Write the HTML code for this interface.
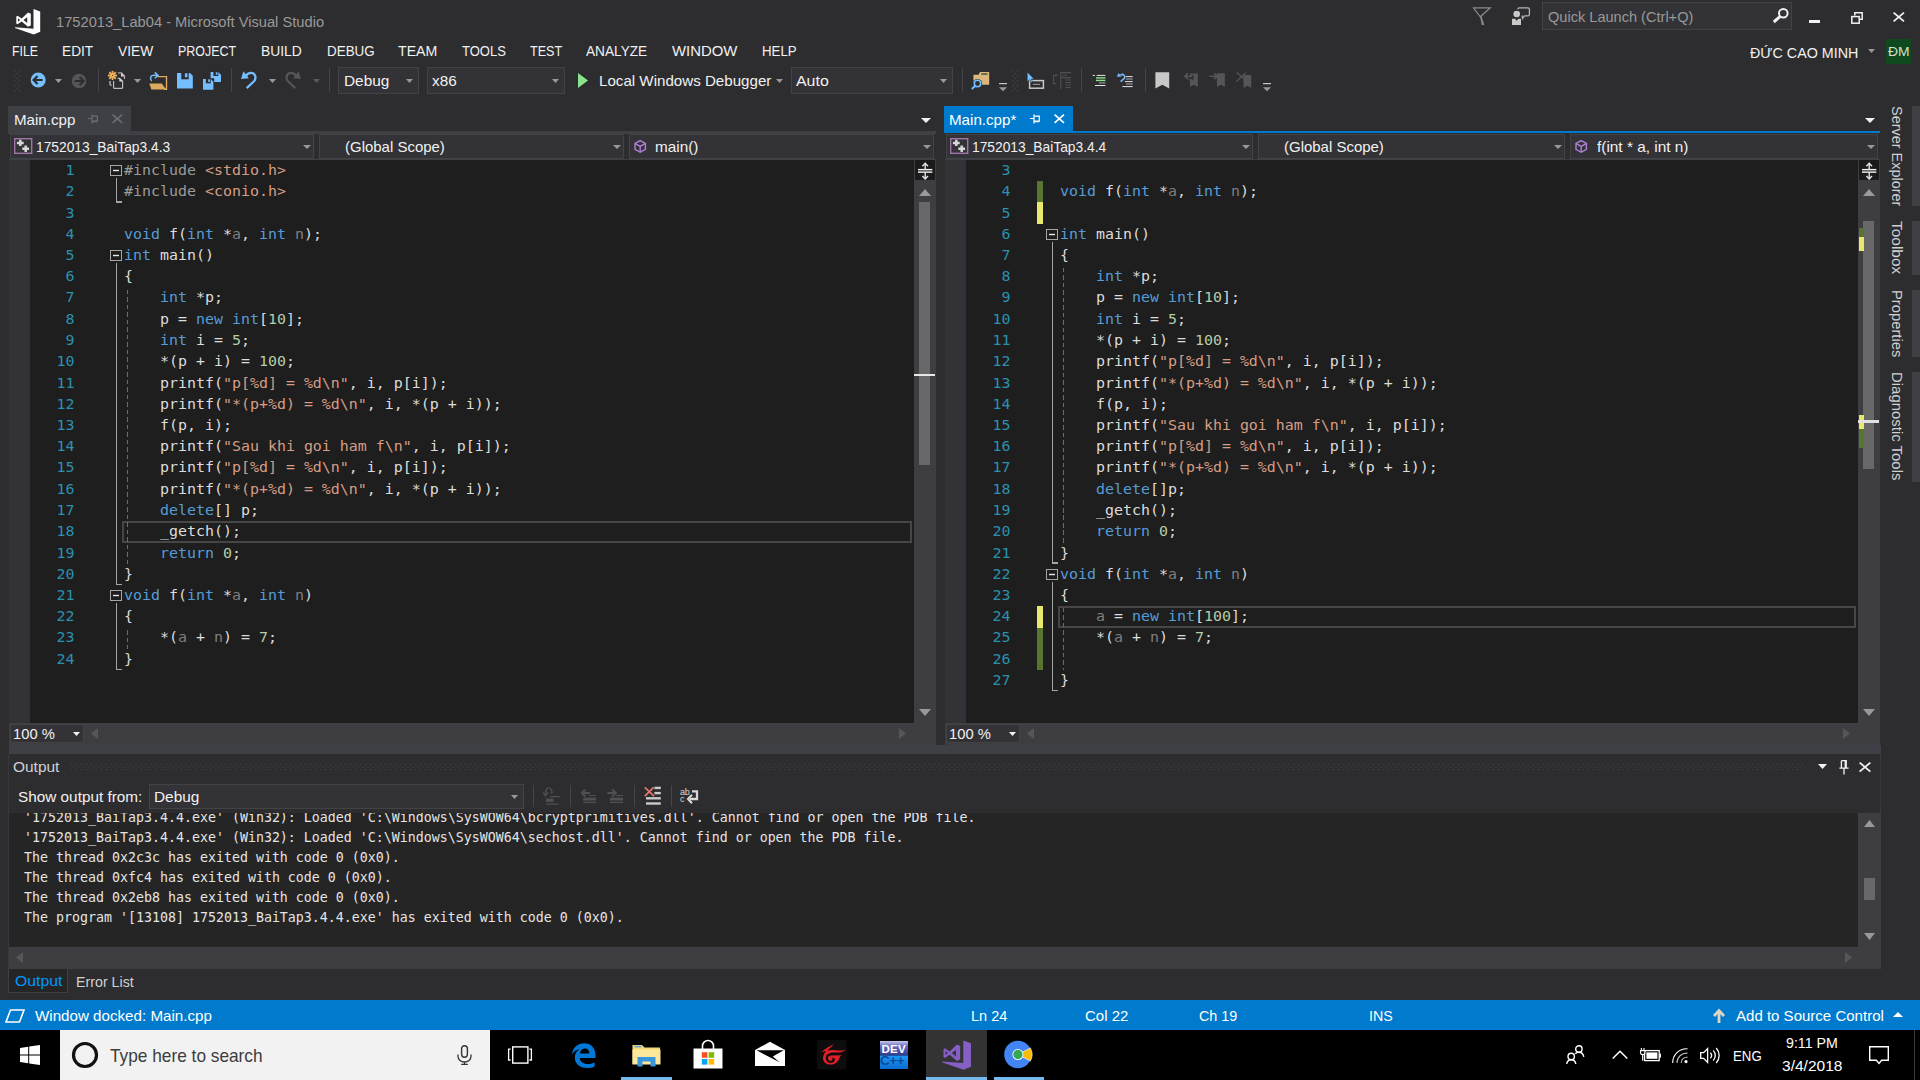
<!DOCTYPE html>
<html lang="en"><head><meta charset="utf-8"><title>1752013_Lab04 - Microsoft Visual Studio</title>
<style>
html,body{margin:0;padding:0;background:#2d2d30;}
#r{position:relative;width:1920px;height:1080px;overflow:hidden;background:#2d2d30;font-family:"Liberation Sans",sans-serif;}
#r div,#r span,#r svg{position:absolute;}
#r span{white-space:pre;line-height:20px;height:20px;transform-origin:0 50%;}
#r svg{overflow:visible;}
#r .m{font-family:"DejaVu Sans Mono","Liberation Mono",monospace;font-size:14.95px;}
#r .c{color:#dcdcdc;}
#r .o{font-family:"DejaVu Sans Mono","Liberation Mono",monospace;font-size:13.29px;color:#e4e4e4;}
#r b{font-weight:normal;}
.k{color:#569cd6}.s{color:#d69d85}.n{color:#b5cea8}.g{color:#7f7f7f}.p{color:#9b9b9b}
</style></head>
<body><div id="r">
<svg style="left:15px;top:8px;" width="26" height="27" viewBox="0 0 26 27"><path d="M18.5 1L25.2 3.5V23.8L18.7 26.5L-0.1 20L0.2 19.3L18.5 20.7Z M1.3 8.6L2.5 7.8L6.7 10.6L13 4.6L15.8 5.8V17.6L13 18.8L6.7 13.4L2.5 16.2L1.3 15.4Z M3 10.3L5.1 12L3 13.7Z M12.2 9.2V15L8.5 12Z" fill="#ffffff" fill-rule="evenodd"/></svg>
<span style="left:56px;top:12.13px;font-size:15.5px;color:#999999;transform:scaleX(0.9465);">1752013_Lab04 - Microsoft Visual Studio</span>
<svg style="left:1472px;top:7px;" width="20" height="19" viewBox="0 0 20 19"><path d="M1.5 0.8H18.3L8.3 9.8Z" fill="none" stroke="#8a8a8a" stroke-width="1.2" stroke-linejoin="miter"/><path d="M8 9.5L9.3 8.6L12.3 18H9.8Z" fill="#8a8a8a"/></svg>
<svg style="left:1511px;top:7px;" width="20" height="19" viewBox="0 0 20 19"><circle cx="5.7" cy="7" r="3.3" fill="#c8c8c8"/><path d="M1 11.8H4L5.7 13.8L7.4 11.8H10V18H1Z" fill="#c8c8c8"/><path d="M7 2.2Q7 0.9 8.3 0.9H17Q18.4 0.9 18.4 2.2V7.5Q18.4 8.8 17 8.8H13.5L11.6 11.5L11 8.5" fill="none" stroke="#b4b4b4" stroke-width="1.3"/></svg>
<div style="left:1542px;top:2px;width:250px;height:28px;background:#333337;border:1px solid #434346;box-sizing:border-box;"></div>
<span style="left:1548px;top:7.30px;font-size:15px;color:#999999;transform:scaleX(0.9711);">Quick Launch (Ctrl+Q)</span>
<svg style="left:1772px;top:7px;" width="18" height="18" viewBox="0 0 18 18"><circle cx="11.3" cy="6.3" r="4.3" fill="none" stroke="#f1f1f1" stroke-width="2"/><path d="M8.2 9.4L1.8 15" stroke="#f1f1f1" stroke-width="3" stroke-linecap="butt"/></svg>
<div style="left:1809px;top:20px;width:11px;height:3px;background:#f1f1f1;"></div>
<svg style="left:1851px;top:12px;" width="12" height="12" viewBox="0 0 12 12"><path d="M3.8 3.5V0.8H11.2V7.2H8.8" fill="none" stroke="#f1f1f1" stroke-width="1.5"/><rect x="0.8" y="4.6" width="7.4" height="6.6" fill="none" stroke="#f1f1f1" stroke-width="1.5"/></svg>
<svg style="left:1893.2px;top:12px;" width="11.6" height="10" viewBox="0 0 11.6 10"><path d="M0.6 0.6L11.0 9.4M11.0 0.6L0.6 9.4" stroke="#f1f1f1" stroke-width="1.8"/></svg>
<span style="left:12px;top:41.33px;font-size:15.5px;color:#f1f1f1;transform:scaleX(0.7977);">FILE</span>
<span style="left:62px;top:41.33px;font-size:15.5px;color:#f1f1f1;transform:scaleX(0.8847);">EDIT</span>
<span style="left:118px;top:41.33px;font-size:15.5px;color:#f1f1f1;transform:scaleX(0.8896);">VIEW</span>
<span style="left:178px;top:41.33px;font-size:15.5px;color:#f1f1f1;transform:scaleX(0.8035);">PROJECT</span>
<span style="left:260.5px;top:41.33px;font-size:15.5px;color:#f1f1f1;transform:scaleX(0.8925);">BUILD</span>
<span style="left:326.5px;top:41.33px;font-size:15.5px;color:#f1f1f1;transform:scaleX(0.8655);">DEBUG</span>
<span style="left:398px;top:41.33px;font-size:15.5px;color:#f1f1f1;transform:scaleX(0.9121);">TEAM</span>
<span style="left:462px;top:41.33px;font-size:15.5px;color:#f1f1f1;transform:scaleX(0.8408);">TOOLS</span>
<span style="left:530px;top:41.33px;font-size:15.5px;color:#f1f1f1;transform:scaleX(0.8111);">TEST</span>
<span style="left:586px;top:41.33px;font-size:15.5px;color:#f1f1f1;transform:scaleX(0.8810);">ANALYZE</span>
<span style="left:672px;top:41.33px;font-size:15.5px;color:#f1f1f1;transform:scaleX(0.9608);">WINDOW</span>
<span style="left:762px;top:41.33px;font-size:15.5px;color:#f1f1f1;transform:scaleX(0.8569);">HELP</span>
<span style="left:1750px;top:43.30px;font-size:15px;color:#f1f1f1;transform:scaleX(0.9529);">ĐỨC CAO MINH</span>
<svg style="left:1868px;top:49px;" width="7" height="4" viewBox="0 0 7 4"><path d="M0 0H7L3.5 4Z" fill="#999999"/></svg>
<div style="left:1886px;top:39px;width:25px;height:25px;background:#0e4a1d;"></div>
<span style="left:1888.3px;top:41.80px;font-size:13px;color:#d0e0d0;transform:scaleX(1.0658);">ĐM</span>
<svg style="left:14px;top:70px;" width="7" height="22" viewBox="0 0 7 22"><g fill="#4a4a4f"><rect x="0.2" y="0.20000000000000007" width="1.2" height="1.2"/><rect x="4.9" y="0.20000000000000007" width="1.2" height="1.2"/><rect x="2.55" y="2.6999999999999997" width="1.2" height="1.2"/><rect x="0.2" y="5.2" width="1.2" height="1.2"/><rect x="4.9" y="5.2" width="1.2" height="1.2"/><rect x="2.55" y="7.700000000000001" width="1.2" height="1.2"/><rect x="0.2" y="10.200000000000001" width="1.2" height="1.2"/><rect x="4.9" y="10.200000000000001" width="1.2" height="1.2"/><rect x="2.55" y="12.700000000000001" width="1.2" height="1.2"/><rect x="0.2" y="15.200000000000001" width="1.2" height="1.2"/><rect x="4.9" y="15.200000000000001" width="1.2" height="1.2"/><rect x="2.55" y="17.7" width="1.2" height="1.2"/><rect x="0.2" y="20.2" width="1.2" height="1.2"/><rect x="4.9" y="20.2" width="1.2" height="1.2"/></g></svg>
<svg style="left:30px;top:72px;" width="16" height="16" viewBox="0 0 16 16"><circle cx="8.2" cy="8" r="7.5" fill="#75beff"/><path d="M12.6 8H4M7.6 4L3.6 8L7.6 12" fill="none" stroke="#2d2d30" stroke-width="2.2"/></svg>
<svg style="left:55px;top:79px;" width="7" height="4" viewBox="0 0 7 4"><path d="M0 0H7L3.5 4Z" fill="#999999"/></svg>
<svg style="left:71px;top:72px;" width="16" height="17" viewBox="0 0 16 17"><circle cx="8" cy="9" r="7.3" fill="#555558"/><path d="M3.6 9H12.2M8.6 5L12.6 9L8.6 13" fill="none" stroke="#2d2d30" stroke-width="2.2"/></svg>
<div style="left:98px;top:68px;width:1px;height:24px;background:#46464a;"></div>
<svg style="left:108px;top:71px;" width="18" height="19" viewBox="0 0 18 19"><path d="M4.5 4.5L9.10 4.50" stroke="#f0b35e" stroke-width="1.8"/><path d="M4.5 4.5L7.75 7.75" stroke="#f0b35e" stroke-width="1.8"/><path d="M4.5 4.5L4.50 9.10" stroke="#f0b35e" stroke-width="1.8"/><path d="M4.5 4.5L1.25 7.75" stroke="#f0b35e" stroke-width="1.8"/><path d="M4.5 4.5L-0.10 4.50" stroke="#f0b35e" stroke-width="1.8"/><path d="M4.5 4.5L1.25 1.25" stroke="#f0b35e" stroke-width="1.8"/><path d="M4.5 4.5L4.50 -0.10" stroke="#f0b35e" stroke-width="1.8"/><path d="M4.5 4.5L7.75 1.25" stroke="#f0b35e" stroke-width="1.8"/><circle cx="4.5" cy="4.5" r="1.5" fill="#f0b35e"/><circle cx="4.5" cy="4.5" r="0.55" fill="#2d2d30"/><path d="M9.8 1.8H13.4L16.5 5V8" fill="none" stroke="#a8a8a8" stroke-width="1.3"/><path d="M13 1.6L16.8 5.4H13Z" fill="#d4d4d4"/><path d="M9.6 7.4H11.6L14.6 10.2V16.4Q14.6 17.4 13.6 17.4H6.6Q5.6 17.4 5.6 16.4V10" fill="none" stroke="#bcbcbc" stroke-width="1.2"/><path d="M11.4 7L15 10.6H11.4Z" fill="#dcdcdc"/><path d="M2 10V13Q2 14.4 3.6 14.4" fill="none" stroke="#c0c0c0" stroke-width="1.3"/></svg>
<svg style="left:134px;top:79px;" width="7" height="4" viewBox="0 0 7 4"><path d="M0 0H7L3.5 4Z" fill="#999999"/></svg>
<svg style="left:149px;top:72px;" width="19" height="18" viewBox="0 0 19 18"><path d="M8.2 4.6H17.5V17.2H15" fill="none" stroke="#dcab5f" stroke-width="1.4"/><path d="M0.3 11.6H12.8L17 17.6H2.4Z" fill="#dcab5f"/><path d="M2.8 9C0.3 6.5 1.5 3.3 5 3.3H8" fill="none" stroke="#75beff" stroke-width="1.5"/><path d="M5.8 0.4L9 3.3L5.8 6.3" fill="none" stroke="#75beff" stroke-width="1.5"/></svg>
<svg style="left:177px;top:73px;" width="16" height="16" viewBox="0 0 16 16"><path d="M0 0H13.0L15.8 2.8V15.6H0Z" fill="#75beff"/><rect x="4.27" y="-0.1" width="7.43" height="6.40" fill="#2d2d30"/><rect x="7.90" y="0.3" width="2.53" height="3.90" fill="#75beff"/></svg>
<svg style="left:202px;top:72px;" width="20" height="18" viewBox="0 0 20 18"><g transform="translate(8.6,0)"><path d="M0 0H7.6000000000000005L10.4 2.8V10H0Z" fill="#75beff"/><rect x="2.81" y="-0.1" width="4.89" height="4.10" fill="#2d2d30"/><rect x="5.20" y="0.3" width="1.66" height="2.50" fill="#75beff"/></g><path d="M7.6 6.2H12.2V11H7.6Z" fill="#2d2d30"/><g transform="translate(1,7)"><path d="M0 0H7.6000000000000005L10.4 2.8V10.7H0Z" fill="#75beff"/><rect x="2.81" y="-0.1" width="4.89" height="4.39" fill="#2d2d30"/><rect x="5.20" y="0.3" width="1.66" height="2.67" fill="#75beff"/></g></svg>
<div style="left:231px;top:68px;width:1px;height:24px;background:#46464a;"></div>
<svg style="left:241px;top:72px;" width="16" height="17" viewBox="0 0 16 17"><g><path d="M5.7 16.2L13 9.3C15.8 6.3 14.3 0.8 10 0.8C7.6 0.8 5.8 2.2 4.8 4.2" fill="none" stroke="#75beff" stroke-width="2.3"/><path d="M2.4 -0.8L0 6.9L7.9 6.3Z" fill="#75beff"/></g></svg>
<svg style="left:269px;top:79px;" width="7" height="4" viewBox="0 0 7 4"><path d="M0 0H7L3.5 4Z" fill="#999999"/></svg>
<svg style="left:285px;top:72px;" width="16" height="17" viewBox="0 0 16 17"><g transform="translate(16,0) scale(-1,1)"><path d="M5.7 16.2L13 9.3C15.8 6.3 14.3 0.8 10 0.8C7.6 0.8 5.8 2.2 4.8 4.2" fill="none" stroke="#555558" stroke-width="2.3"/><path d="M2.4 -0.8L0 6.9L7.9 6.3Z" fill="#555558"/></g></svg>
<svg style="left:313px;top:79px;" width="7" height="4" viewBox="0 0 7 4"><path d="M0 0H7L3.5 4Z" fill="#5a5a5e"/></svg>
<div style="left:329px;top:68px;width:1px;height:24px;background:#46464a;"></div>
<div style="left:338px;top:67px;width:81px;height:27px;background:#333337;border:1px solid #434346;box-sizing:border-box;"></div>
<span style="left:343.5px;top:71.10px;font-size:15px;color:#f1f1f1;transform:scaleX(1.0268);">Debug</span>
<svg style="left:406px;top:79px;" width="7" height="4" viewBox="0 0 7 4"><path d="M0 0H7L3.5 4Z" fill="#999999"/></svg>
<div style="left:427px;top:67px;width:138px;height:27px;background:#333337;border:1px solid #434346;box-sizing:border-box;"></div>
<span style="left:431.7px;top:71.10px;font-size:15px;color:#f1f1f1;transform:scaleX(1.0204);">x86</span>
<svg style="left:552px;top:79px;" width="7" height="4" viewBox="0 0 7 4"><path d="M0 0H7L3.5 4Z" fill="#999999"/></svg>
<svg style="left:578px;top:73px;" width="10" height="15" viewBox="0 0 10 15"><path d="M0 0L10 7.5L0 15Z" fill="#8ae28a"/></svg>
<span style="left:599px;top:70.80px;font-size:15px;color:#f1f1f1;transform:scaleX(1.0084);">Local Windows Debugger</span>
<svg style="left:776px;top:79px;" width="7" height="4" viewBox="0 0 7 4"><path d="M0 0H7L3.5 4Z" fill="#999999"/></svg>
<div style="left:791px;top:67px;width:162px;height:27px;background:#333337;border:1px solid #434346;box-sizing:border-box;"></div>
<span style="left:796px;top:71.10px;font-size:15px;color:#f1f1f1;transform:scaleX(1.0608);">Auto</span>
<svg style="left:940px;top:79px;" width="7" height="4" viewBox="0 0 7 4"><path d="M0 0H7L3.5 4Z" fill="#999999"/></svg>
<div style="left:962px;top:68px;width:1px;height:24px;background:#46464a;"></div>
<svg style="left:971px;top:71px;" width="19" height="18" viewBox="0 0 19 18"><path d="M2.4 3.8H7.5L9 1H18.2V13.8H2.4Z" fill="#dcb67a"/><rect x="10.2" y="2.4" width="6.3" height="1.3" fill="#2d4a3a"/><circle cx="6.5" cy="12.5" r="4.6" fill="#2d2d30"/><circle cx="6.5" cy="12.5" r="3.2" fill="none" stroke="#75beff" stroke-width="1.6"/><path d="M4.3 14.8L0.8 18" stroke="#75beff" stroke-width="2"/></svg>
<svg style="left:999px;top:83px;" width="8" height="8.2" viewBox="0 0 8 8.2"><rect x="0" y="0" width="8" height="1.2" fill="#c8c8c8"/><path d="M0 4.3H8L4 8.2Z" fill="#999999"/></svg>
<svg style="left:1012px;top:70px;" width="7" height="22" viewBox="0 0 7 22"><g fill="#4a4a4f"><rect x="0.2" y="0.20000000000000007" width="1.2" height="1.2"/><rect x="4.9" y="0.20000000000000007" width="1.2" height="1.2"/><rect x="2.55" y="2.6999999999999997" width="1.2" height="1.2"/><rect x="0.2" y="5.2" width="1.2" height="1.2"/><rect x="4.9" y="5.2" width="1.2" height="1.2"/><rect x="2.55" y="7.700000000000001" width="1.2" height="1.2"/><rect x="0.2" y="10.200000000000001" width="1.2" height="1.2"/><rect x="4.9" y="10.200000000000001" width="1.2" height="1.2"/><rect x="2.55" y="12.700000000000001" width="1.2" height="1.2"/><rect x="0.2" y="15.200000000000001" width="1.2" height="1.2"/><rect x="4.9" y="15.200000000000001" width="1.2" height="1.2"/><rect x="2.55" y="17.7" width="1.2" height="1.2"/><rect x="0.2" y="20.2" width="1.2" height="1.2"/><rect x="4.9" y="20.2" width="1.2" height="1.2"/></g></svg>
<svg style="left:1027px;top:72px;" width="18" height="17" viewBox="0 0 18 17"><rect x="2.6" y="8.6" width="13.8" height="7.6" fill="#2d2d30" stroke="#c8c8c8" stroke-width="1.5"/><rect x="5.8" y="11.8" width="7.2" height="1.1" fill="#999999"/><path d="M0.2 0L7.2 7L4.3 7.2L5.6 10L3.9 10.6L2.6 7.8L0.2 9.6Z" fill="#75beff" stroke="#2d2d30" stroke-width="0.6"/></svg>
<svg style="left:1053px;top:72px;" width="18" height="17" viewBox="0 0 18 17"><g fill="none" stroke="#505054" stroke-width="1.1"><path d="M3 3.3H0.6V11.6H3.4"/><path d="M7.8 0V17"/><path d="M7.8 0.6H18M7.8 5.6H18M9.5 3.3H14M12.3 8H18M12.3 10.5H18M12.3 13H18M12.3 15.5H18"/></g><path d="M2.6 1.6L4.8 3.3L2.6 5Z" fill="#505054"/></svg>
<div style="left:1081px;top:68px;width:1px;height:24px;background:#46464a;"></div>
<svg style="left:1092px;top:74px;" width="14" height="12" viewBox="0 0 14 12"><rect x="0.7" y="0.9" width="2.2" height="1" fill="#e6e6e6"/><rect x="4.7" y="0.9" width="8.7" height="1" fill="#e6e6e6"/><rect x="4" y="3.2" width="9.4" height="1.4" fill="#8ae28a"/><rect x="4" y="5.7" width="9.4" height="1.4" fill="#8ae28a"/><rect x="7" y="8.4" width="6.4" height="1" fill="#aaaaaa"/><rect x="3" y="11" width="10.4" height="1" fill="#e6e6e6"/></svg>
<svg style="left:1117px;top:73px;" width="16" height="14" viewBox="0 0 16 14"><path d="M3.6 8.6L7 5.6A2.3 2.3 0 0 0 3.6 2.2" fill="none" stroke="#75beff" stroke-width="1.5"/><path d="M0 3.8L1.4 0L4.6 3.6Z" fill="#75beff"/><rect x="9" y="3.1" width="6.7" height="1" fill="#e6e6e6"/><rect x="9" y="5.5" width="6.7" height="1" fill="#aaaaaa"/><rect x="7.9" y="8.1" width="7.8" height="1" fill="#e6e6e6"/><rect x="9" y="10.5" width="6.7" height="1" fill="#aaaaaa"/><rect x="5.4" y="13.1" width="10.3" height="1" fill="#e6e6e6"/></svg>
<div style="left:1145px;top:68px;width:1px;height:24px;background:#46464a;"></div>
<svg style="left:1155px;top:72px;" width="14" height="17" viewBox="0 0 14 17"><path d="M0.4 0.2H14.2V16.6L7.3 12.8L0.4 16.6Z" fill="#c8c8c8"/></svg>
<svg style="left:1184px;top:72px;" width="14" height="16" viewBox="0 0 14 16"><path d="M6 1.6H13.8V15L9.9 12.8L6 15Z" fill="#555558"/><path d="M9.5 3.2L6.4 3.2L6.4 8.4L9.5 8.4Z" fill="#2d2d30"/><path d="M8.2 4.2H1M4 1.2L0.8 4.2L4 7.2" fill="none" stroke="#555558" stroke-width="1.6"/><path d="M4 7.5L8.6 10V7.2Z" fill="#555558"/></svg>
<svg style="left:1209px;top:72px;" width="16" height="16" viewBox="0 0 16 16"><path d="M8 1.2H15.9V15L11.9 12.8L8 15Z" fill="#555558"/><path d="M0.4 4.2H8M5 1.2L8.4 4.2L5 7.2" fill="none" stroke="#555558" stroke-width="1.6"/></svg>
<svg style="left:1236px;top:72px;" width="16" height="17" viewBox="0 0 16 17"><path d="M7.5 3H15.2V16L11.3 13.8L7.5 16Z" fill="#555558"/><path d="M0.8 0.4L11 9.6M9.6 1L0.4 9.6" fill="none" stroke="#555558" stroke-width="1.4"/></svg>
<svg style="left:1263px;top:83px;" width="8" height="8.2" viewBox="0 0 8 8.2"><rect x="0" y="0" width="8" height="1.2" fill="#c8c8c8"/><path d="M0 4.3H8L4 8.2Z" fill="#999999"/></svg>
<div style="left:8px;top:106px;width:123px;height:25px;background:#3f3f46;"></div>
<div style="left:8px;top:131px;width:928px;height:2.5px;background:#3f3f46;"></div>
<span style="left:13.5px;top:109.90px;font-size:15px;color:#f1f1f1;transform:scaleX(1.0082);">Main.cpp</span>
<svg style="left:88px;top:113.8px;" width="10" height="10" viewBox="0 0 10 10"><path d="M0 4.5H4M4 0.5V9.5M4 2.2H9.3V7H4M4 7.7H9.3" fill="none" stroke="#6d6d70" stroke-width="1.2"/></svg>
<svg style="left:111.6px;top:114.2px;" width="10.8" height="9.5" viewBox="0 0 10.8 9.5"><path d="M0.6 0.6L10.200000000000001 8.9M10.200000000000001 0.6L0.6 8.9" stroke="#6d6d70" stroke-width="1.6"/></svg>
<svg style="left:921px;top:118px;" width="10" height="5" viewBox="0 0 10 5"><path d="M0 0H10L5.0 5Z" fill="#f1f1f1"/></svg>
<div style="left:9px;top:133.5px;width:927px;height:26.5px;background:#2d2d30;"></div>
<div style="left:9px;top:158.6px;width:927px;height:1.5px;background:#3f3f46;"></div>
<div style="left:9.6px;top:133.6px;width:304.6666666666667px;height:25px;background:#333337;border:1px solid #434346;box-sizing:border-box;"></div>
<svg style="left:303.2666666666667px;top:145px;" width="8" height="4" viewBox="0 0 8 4"><path d="M0 0H8L4.0 4Z" fill="#999999"/></svg>
<div style="left:319.2666666666667px;top:133.6px;width:304.6666666666667px;height:25px;background:#333337;border:1px solid #434346;box-sizing:border-box;"></div>
<svg style="left:612.9333333333334px;top:145px;" width="8" height="4" viewBox="0 0 8 4"><path d="M0 0H8L4.0 4Z" fill="#999999"/></svg>
<div style="left:628.9333333333334px;top:133.6px;width:304.6666666666667px;height:25px;background:#333337;border:1px solid #434346;box-sizing:border-box;"></div>
<svg style="left:922.6000000000001px;top:145px;" width="8" height="4" viewBox="0 0 8 4"><path d="M0 0H8L4.0 4Z" fill="#999999"/></svg>
<svg style="left:14px;top:138px;" width="19" height="17" viewBox="0 0 19 17"><rect x="0.7" y="0.7" width="17" height="14.6" fill="none" stroke="#a074a8" stroke-width="1.4"/><path d="M2.9 4.9H9.7M6.3 1.7000000000000002V8.100000000000001" stroke="#d8d8d8" stroke-width="2.5"/><path d="M8.299999999999999 10.8H15.1M11.7 7.6000000000000005V14.0" stroke="#d8d8d8" stroke-width="2.5"/></svg>
<span style="left:36px;top:137.10px;font-size:15px;color:#f1f1f1;transform:scaleX(0.9195);">1752013_BaiTap3.4.3</span>
<span style="left:345.1666666666667px;top:137.10px;font-size:15px;color:#f1f1f1;transform:scaleX(0.9980);">(Global Scope)</span>
<svg style="left:633.8333333333334px;top:140px;" width="13" height="13" viewBox="0 0 13 13"><path d="M6.2 0.6L11.4 3.4V9.4L6.2 12.3L1 9.4V3.4Z" fill="none" stroke="#b180d7" stroke-width="1.4"/><path d="M1.3 3.6L6.2 6.4L11.1 3.6M6.2 6.4V12" fill="none" stroke="#b180d7" stroke-width="1.4"/></svg>
<span style="left:655.3333333333334px;top:137.10px;font-size:15px;color:#f1f1f1;transform:scaleX(1.0206);">main()</span>
<div style="left:9px;top:160px;width:21px;height:562.5px;background:#333337;"></div>
<div style="left:30px;top:160px;width:884px;height:562.5px;background:#1e1e1e;"></div>
<div style="left:122px;top:521px;width:790px;height:22px;background:transparent;border:2px solid #464646;box-sizing:border-box;"></div>
<span class="m" style="left:65.5px;top:160.43px;font-size:14.95px;color:#2b91af;font-family:"DejaVu Sans Mono", "Liberation Mono", monospace;">1</span>
<span class="m c" style="left:124px;top:160.43px"><b class="p">#include</b> <b class="s">&lt;stdio.h&gt;</b></span>
<span class="m" style="left:65.5px;top:181.43px;font-size:14.95px;color:#2b91af;font-family:"DejaVu Sans Mono", "Liberation Mono", monospace;">2</span>
<span class="m c" style="left:124px;top:181.43px"><b class="p">#include</b> <b class="s">&lt;conio.h&gt;</b></span>
<span class="m" style="left:65.5px;top:203.43px;font-size:14.95px;color:#2b91af;font-family:"DejaVu Sans Mono", "Liberation Mono", monospace;">3</span>
<span class="m" style="left:65.5px;top:224.43px;font-size:14.95px;color:#2b91af;font-family:"DejaVu Sans Mono", "Liberation Mono", monospace;">4</span>
<span class="m c" style="left:124px;top:224.43px"><b class="k">void</b> f(<b class="k">int</b> *<b class="g">a</b>, <b class="k">int</b> <b class="g">n</b>);</span>
<span class="m" style="left:65.5px;top:245.43px;font-size:14.95px;color:#2b91af;font-family:"DejaVu Sans Mono", "Liberation Mono", monospace;">5</span>
<span class="m c" style="left:124px;top:245.43px"><b class="k">int</b> main()</span>
<span class="m" style="left:65.5px;top:266.43px;font-size:14.95px;color:#2b91af;font-family:"DejaVu Sans Mono", "Liberation Mono", monospace;">6</span>
<span class="m c" style="left:124px;top:266.43px">{</span>
<span class="m" style="left:65.5px;top:287.43px;font-size:14.95px;color:#2b91af;font-family:"DejaVu Sans Mono", "Liberation Mono", monospace;">7</span>
<span class="m c" style="left:124px;top:287.43px">    <b class="k">int</b> *p;</span>
<span class="m" style="left:65.5px;top:309.43px;font-size:14.95px;color:#2b91af;font-family:"DejaVu Sans Mono", "Liberation Mono", monospace;">8</span>
<span class="m c" style="left:124px;top:309.43px">    p = <b class="k">new</b> <b class="k">int</b>[<b class="n">10</b>];</span>
<span class="m" style="left:65.5px;top:330.43px;font-size:14.95px;color:#2b91af;font-family:"DejaVu Sans Mono", "Liberation Mono", monospace;">9</span>
<span class="m c" style="left:124px;top:330.43px">    <b class="k">int</b> i = <b class="n">5</b>;</span>
<span class="m" style="left:56.5px;top:351.43px;font-size:14.95px;color:#2b91af;font-family:"DejaVu Sans Mono", "Liberation Mono", monospace;">10</span>
<span class="m c" style="left:124px;top:351.43px">    *(p + i) = <b class="n">100</b>;</span>
<span class="m" style="left:56.5px;top:373.43px;font-size:14.95px;color:#2b91af;font-family:"DejaVu Sans Mono", "Liberation Mono", monospace;">11</span>
<span class="m c" style="left:124px;top:373.43px">    printf(<b class="s">&quot;p[%d] = %d\n&quot;</b>, i, p[i]);</span>
<span class="m" style="left:56.5px;top:394.43px;font-size:14.95px;color:#2b91af;font-family:"DejaVu Sans Mono", "Liberation Mono", monospace;">12</span>
<span class="m c" style="left:124px;top:394.43px">    printf(<b class="s">&quot;*(p+%d) = %d\n&quot;</b>, i, *(p + i));</span>
<span class="m" style="left:56.5px;top:415.43px;font-size:14.95px;color:#2b91af;font-family:"DejaVu Sans Mono", "Liberation Mono", monospace;">13</span>
<span class="m c" style="left:124px;top:415.43px">    f(p, i);</span>
<span class="m" style="left:56.5px;top:436.43px;font-size:14.95px;color:#2b91af;font-family:"DejaVu Sans Mono", "Liberation Mono", monospace;">14</span>
<span class="m c" style="left:124px;top:436.43px">    printf(<b class="s">&quot;Sau khi goi ham f\n&quot;</b>, i, p[i]);</span>
<span class="m" style="left:56.5px;top:457.43px;font-size:14.95px;color:#2b91af;font-family:"DejaVu Sans Mono", "Liberation Mono", monospace;">15</span>
<span class="m c" style="left:124px;top:457.43px">    printf(<b class="s">&quot;p[%d] = %d\n&quot;</b>, i, p[i]);</span>
<span class="m" style="left:56.5px;top:479.43px;font-size:14.95px;color:#2b91af;font-family:"DejaVu Sans Mono", "Liberation Mono", monospace;">16</span>
<span class="m c" style="left:124px;top:479.43px">    printf(<b class="s">&quot;*(p+%d) = %d\n&quot;</b>, i, *(p + i));</span>
<span class="m" style="left:56.5px;top:500.43px;font-size:14.95px;color:#2b91af;font-family:"DejaVu Sans Mono", "Liberation Mono", monospace;">17</span>
<span class="m c" style="left:124px;top:500.43px">    <b class="k">delete</b>[] p;</span>
<span class="m" style="left:56.5px;top:521.43px;font-size:14.95px;color:#2b91af;font-family:"DejaVu Sans Mono", "Liberation Mono", monospace;">18</span>
<span class="m c" style="left:124px;top:521.43px">    _getch();</span>
<span class="m" style="left:56.5px;top:543.43px;font-size:14.95px;color:#2b91af;font-family:"DejaVu Sans Mono", "Liberation Mono", monospace;">19</span>
<span class="m c" style="left:124px;top:543.43px">    <b class="k">return</b> <b class="n">0</b>;</span>
<span class="m" style="left:56.5px;top:564.43px;font-size:14.95px;color:#2b91af;font-family:"DejaVu Sans Mono", "Liberation Mono", monospace;">20</span>
<span class="m c" style="left:124px;top:564.43px">}</span>
<span class="m" style="left:56.5px;top:585.43px;font-size:14.95px;color:#2b91af;font-family:"DejaVu Sans Mono", "Liberation Mono", monospace;">21</span>
<span class="m c" style="left:124px;top:585.43px"><b class="k">void</b> f(<b class="k">int</b> *<b class="g">a</b>, <b class="k">int</b> <b class="g">n</b>)</span>
<span class="m" style="left:56.5px;top:606.43px;font-size:14.95px;color:#2b91af;font-family:"DejaVu Sans Mono", "Liberation Mono", monospace;">22</span>
<span class="m c" style="left:124px;top:606.43px">{</span>
<span class="m" style="left:56.5px;top:627.43px;font-size:14.95px;color:#2b91af;font-family:"DejaVu Sans Mono", "Liberation Mono", monospace;">23</span>
<span class="m c" style="left:124px;top:627.43px">    *(<b class="g">a</b> + <b class="g">n</b>) = <b class="n">7</b>;</span>
<span class="m" style="left:56.5px;top:649.43px;font-size:14.95px;color:#2b91af;font-family:"DejaVu Sans Mono", "Liberation Mono", monospace;">24</span>
<span class="m c" style="left:124px;top:649.43px">}</span>
<svg style="left:110px;top:165px;" width="12" height="12" viewBox="0 0 12 12"><rect x="0.5" y="0.5" width="11" height="10" fill="#1e1e1e" stroke="#a5a5a5" stroke-width="1"/><rect x="3" y="4.8" width="6" height="1.4" fill="#e8e8e8"/></svg>
<div style="left:115.9px;top:178px;width:1.3px;height:24.599999999999987px;background:#a5a5a5;"></div>
<div style="left:115.9px;top:201.2px;width:6.3px;height:1.4px;background:#a5a5a5;"></div>
<svg style="left:110px;top:250px;" width="12" height="12" viewBox="0 0 12 12"><rect x="0.5" y="0.5" width="11" height="10" fill="#1e1e1e" stroke="#a5a5a5" stroke-width="1"/><rect x="3" y="4.8" width="6" height="1.4" fill="#e8e8e8"/></svg>
<div style="left:115.9px;top:263px;width:1.3px;height:322.1px;background:#a5a5a5;"></div>
<div style="left:115.9px;top:583.7px;width:6.3px;height:1.4px;background:#a5a5a5;"></div>
<svg style="left:110px;top:590px;" width="12" height="12" viewBox="0 0 12 12"><rect x="0.5" y="0.5" width="11" height="10" fill="#1e1e1e" stroke="#a5a5a5" stroke-width="1"/><rect x="3" y="4.8" width="6" height="1.4" fill="#e8e8e8"/></svg>
<div style="left:115.9px;top:603px;width:1.3px;height:67.10000000000005px;background:#a5a5a5;"></div>
<div style="left:115.9px;top:668.7px;width:6.3px;height:1.4px;background:#a5a5a5;"></div>
<div style="left:126.7px;top:289.50px;width:1.2px;height:274.25px;background:repeating-linear-gradient(180deg,#6c6c6c 0 4.5px,transparent 4.5px 7.5px)"></div>
<div style="left:126.7px;top:629.50px;width:1.2px;height:19.25px;background:repeating-linear-gradient(180deg,#6c6c6c 0 4.5px,transparent 4.5px 7.5px)"></div>
<div style="left:914px;top:160px;width:22px;height:562.5px;background:#3e3e42;"></div>
<div style="left:915px;top:160px;width:20px;height:20px;background:#1b1b1c;"></div>
<svg style="left:918px;top:163px;" width="15" height="17" viewBox="0 0 15 17"><path d="M7.2 0V16" stroke="#e6e6e6" stroke-width="1.4"/><path d="M4.4 3.2L7.2 0.3L10 3.2M4.4 13L7.2 16L10 13" fill="none" stroke="#e6e6e6" stroke-width="1.4"/><rect x="0" y="6" width="14.3" height="3.8" fill="#6a6a6a"/><rect x="0" y="5.9" width="14.3" height="1.1" fill="#f1f1f1"/><rect x="0" y="8.7" width="14.3" height="1.1" fill="#f1f1f1"/></svg>
<svg style="left:919px;top:189px;" width="12" height="7" viewBox="0 0 12 7"><path d="M0 7H12L6 0Z" fill="#999999"/></svg>
<svg style="left:919px;top:709px;" width="12" height="7" viewBox="0 0 12 7"><path d="M0 0H12L6 7Z" fill="#999999"/></svg>
<div style="left:9px;top:722.5px;width:927px;height:22px;background:#3e3e42;"></div>
<div style="left:9px;top:744.5px;width:1872px;height:9.2px;background:#3f3f46;"></div>
<div style="left:9.5px;top:723.8px;width:74.5px;height:19.7px;background:#333337;border:1px solid #434346;box-sizing:border-box;"></div>
<span style="left:12.5px;top:724.30px;font-size:15px;color:#f1f1f1;transform:scaleX(0.9834);">100 %</span>
<svg style="left:73px;top:732px;" width="7" height="4" viewBox="0 0 7 4"><path d="M0 0H7L3.5 4Z" fill="#f1f1f1"/></svg>
<svg style="left:91px;top:728px;" width="7" height="11" viewBox="0 0 7 11"><path d="M7 0V11L0 5.5Z" fill="#55555a"/></svg>
<svg style="left:899px;top:728px;" width="7" height="11" viewBox="0 0 7 11"><path d="M0 0V11L7 5.5Z" fill="#55555a"/></svg>
<div style="left:919px;top:201.8px;width:11px;height:263.1px;background:#686868;"></div>
<div style="left:914px;top:373.8px;width:21px;height:2.5px;background:#e8e8e8;"></div>
<div style="left:944px;top:106px;width:129px;height:25px;background:#007acc;"></div>
<div style="left:944px;top:130.7px;width:936px;height:2.5px;background:#007acc;"></div>
<span style="left:949px;top:109.90px;font-size:15px;color:#ffffff;transform:scaleX(1.0099);">Main.cpp*</span>
<svg style="left:1030px;top:113.8px;" width="10" height="10" viewBox="0 0 10 10"><path d="M0 4.5H4M4 0.5V9.5M4 2.2H9.3V7H4M4 7.7H9.3" fill="none" stroke="#ffffff" stroke-width="1.2"/></svg>
<svg style="left:1053.8px;top:114.4px;" width="10.6" height="9.5" viewBox="0 0 10.6 9.5"><path d="M0.6 0.6L10.0 8.9M10.0 0.6L0.6 8.9" stroke="#ffffff" stroke-width="1.7"/></svg>
<svg style="left:1865px;top:118px;" width="10" height="5" viewBox="0 0 10 5"><path d="M0 0H10L5.0 5Z" fill="#f1f1f1"/></svg>
<div style="left:945px;top:133.5px;width:935px;height:26.5px;background:#2d2d30;"></div>
<div style="left:945px;top:158.6px;width:935px;height:1.5px;background:#3f3f46;"></div>
<div style="left:945.6px;top:133.6px;width:307.3333333333333px;height:25px;background:#333337;border:1px solid #434346;box-sizing:border-box;"></div>
<svg style="left:1241.9333333333334px;top:145px;" width="8" height="4" viewBox="0 0 8 4"><path d="M0 0H8L4.0 4Z" fill="#999999"/></svg>
<div style="left:1257.9333333333334px;top:133.6px;width:307.3333333333333px;height:25px;background:#333337;border:1px solid #434346;box-sizing:border-box;"></div>
<svg style="left:1554.2666666666667px;top:145px;" width="8" height="4" viewBox="0 0 8 4"><path d="M0 0H8L4.0 4Z" fill="#999999"/></svg>
<div style="left:1570.2666666666667px;top:133.6px;width:307.3333333333333px;height:25px;background:#333337;border:1px solid #434346;box-sizing:border-box;"></div>
<svg style="left:1866.6px;top:145px;" width="8" height="4" viewBox="0 0 8 4"><path d="M0 0H8L4.0 4Z" fill="#999999"/></svg>
<svg style="left:950px;top:138px;" width="19" height="17" viewBox="0 0 19 17"><rect x="0.7" y="0.7" width="17" height="14.6" fill="none" stroke="#a074a8" stroke-width="1.4"/><path d="M2.9 4.9H9.7M6.3 1.7000000000000002V8.100000000000001" stroke="#d8d8d8" stroke-width="2.5"/><path d="M8.299999999999999 10.8H15.1M11.7 7.6000000000000005V14.0" stroke="#d8d8d8" stroke-width="2.5"/></svg>
<span style="left:972px;top:137.10px;font-size:15px;color:#f1f1f1;transform:scaleX(0.9195);">1752013_BaiTap3.4.4</span>
<span style="left:1283.8333333333333px;top:137.10px;font-size:15px;color:#f1f1f1;transform:scaleX(0.9980);">(Global Scope)</span>
<svg style="left:1575.1666666666665px;top:140px;" width="13" height="13" viewBox="0 0 13 13"><path d="M6.2 0.6L11.4 3.4V9.4L6.2 12.3L1 9.4V3.4Z" fill="none" stroke="#b180d7" stroke-width="1.4"/><path d="M1.3 3.6L6.2 6.4L11.1 3.6M6.2 6.4V12" fill="none" stroke="#b180d7" stroke-width="1.4"/></svg>
<span style="left:1596.6666666666665px;top:137.10px;font-size:15px;color:#f1f1f1;transform:scaleX(1.0245);">f(int * a, int n)</span>
<div style="left:945px;top:160px;width:21px;height:562.5px;background:#333337;"></div>
<div style="left:966px;top:160px;width:892px;height:562.5px;background:#1e1e1e;"></div>
<div style="left:1058px;top:606px;width:798px;height:22px;background:transparent;border:2px solid #464646;box-sizing:border-box;"></div>
<div style="left:1037px;top:181px;width:6px;height:21px;background:#577430;"></div>
<div style="left:1037px;top:202px;width:6px;height:22px;background:#e8e86e;"></div>
<div style="left:1037px;top:606px;width:6px;height:22px;background:#e8e86e;"></div>
<div style="left:1037px;top:628px;width:6px;height:42px;background:#577430;"></div>
<span class="m" style="left:1001.5px;top:160.43px;font-size:14.95px;color:#2b91af;font-family:"DejaVu Sans Mono", "Liberation Mono", monospace;">3</span>
<span class="m" style="left:1001.5px;top:181.43px;font-size:14.95px;color:#2b91af;font-family:"DejaVu Sans Mono", "Liberation Mono", monospace;">4</span>
<span class="m c" style="left:1060px;top:181.43px"><b class="k">void</b> f(<b class="k">int</b> *<b class="g">a</b>, <b class="k">int</b> <b class="g">n</b>);</span>
<span class="m" style="left:1001.5px;top:203.43px;font-size:14.95px;color:#2b91af;font-family:"DejaVu Sans Mono", "Liberation Mono", monospace;">5</span>
<span class="m" style="left:1001.5px;top:224.43px;font-size:14.95px;color:#2b91af;font-family:"DejaVu Sans Mono", "Liberation Mono", monospace;">6</span>
<span class="m c" style="left:1060px;top:224.43px"><b class="k">int</b> main()</span>
<span class="m" style="left:1001.5px;top:245.43px;font-size:14.95px;color:#2b91af;font-family:"DejaVu Sans Mono", "Liberation Mono", monospace;">7</span>
<span class="m c" style="left:1060px;top:245.43px">{</span>
<span class="m" style="left:1001.5px;top:266.43px;font-size:14.95px;color:#2b91af;font-family:"DejaVu Sans Mono", "Liberation Mono", monospace;">8</span>
<span class="m c" style="left:1060px;top:266.43px">    <b class="k">int</b> *p;</span>
<span class="m" style="left:1001.5px;top:287.43px;font-size:14.95px;color:#2b91af;font-family:"DejaVu Sans Mono", "Liberation Mono", monospace;">9</span>
<span class="m c" style="left:1060px;top:287.43px">    p = <b class="k">new</b> <b class="k">int</b>[<b class="n">10</b>];</span>
<span class="m" style="left:992.5px;top:309.43px;font-size:14.95px;color:#2b91af;font-family:"DejaVu Sans Mono", "Liberation Mono", monospace;">10</span>
<span class="m c" style="left:1060px;top:309.43px">    <b class="k">int</b> i = <b class="n">5</b>;</span>
<span class="m" style="left:992.5px;top:330.43px;font-size:14.95px;color:#2b91af;font-family:"DejaVu Sans Mono", "Liberation Mono", monospace;">11</span>
<span class="m c" style="left:1060px;top:330.43px">    *(p + i) = <b class="n">100</b>;</span>
<span class="m" style="left:992.5px;top:351.43px;font-size:14.95px;color:#2b91af;font-family:"DejaVu Sans Mono", "Liberation Mono", monospace;">12</span>
<span class="m c" style="left:1060px;top:351.43px">    printf(<b class="s">&quot;p[%d] = %d\n&quot;</b>, i, p[i]);</span>
<span class="m" style="left:992.5px;top:373.43px;font-size:14.95px;color:#2b91af;font-family:"DejaVu Sans Mono", "Liberation Mono", monospace;">13</span>
<span class="m c" style="left:1060px;top:373.43px">    printf(<b class="s">&quot;*(p+%d) = %d\n&quot;</b>, i, *(p + i));</span>
<span class="m" style="left:992.5px;top:394.43px;font-size:14.95px;color:#2b91af;font-family:"DejaVu Sans Mono", "Liberation Mono", monospace;">14</span>
<span class="m c" style="left:1060px;top:394.43px">    f(p, i);</span>
<span class="m" style="left:992.5px;top:415.43px;font-size:14.95px;color:#2b91af;font-family:"DejaVu Sans Mono", "Liberation Mono", monospace;">15</span>
<span class="m c" style="left:1060px;top:415.43px">    printf(<b class="s">&quot;Sau khi goi ham f\n&quot;</b>, i, p[i]);</span>
<span class="m" style="left:992.5px;top:436.43px;font-size:14.95px;color:#2b91af;font-family:"DejaVu Sans Mono", "Liberation Mono", monospace;">16</span>
<span class="m c" style="left:1060px;top:436.43px">    printf(<b class="s">&quot;p[%d] = %d\n&quot;</b>, i, p[i]);</span>
<span class="m" style="left:992.5px;top:457.43px;font-size:14.95px;color:#2b91af;font-family:"DejaVu Sans Mono", "Liberation Mono", monospace;">17</span>
<span class="m c" style="left:1060px;top:457.43px">    printf(<b class="s">&quot;*(p+%d) = %d\n&quot;</b>, i, *(p + i));</span>
<span class="m" style="left:992.5px;top:479.43px;font-size:14.95px;color:#2b91af;font-family:"DejaVu Sans Mono", "Liberation Mono", monospace;">18</span>
<span class="m c" style="left:1060px;top:479.43px">    <b class="k">delete</b>[]p;</span>
<span class="m" style="left:992.5px;top:500.43px;font-size:14.95px;color:#2b91af;font-family:"DejaVu Sans Mono", "Liberation Mono", monospace;">19</span>
<span class="m c" style="left:1060px;top:500.43px">    _getch();</span>
<span class="m" style="left:992.5px;top:521.43px;font-size:14.95px;color:#2b91af;font-family:"DejaVu Sans Mono", "Liberation Mono", monospace;">20</span>
<span class="m c" style="left:1060px;top:521.43px">    <b class="k">return</b> <b class="n">0</b>;</span>
<span class="m" style="left:992.5px;top:543.43px;font-size:14.95px;color:#2b91af;font-family:"DejaVu Sans Mono", "Liberation Mono", monospace;">21</span>
<span class="m c" style="left:1060px;top:543.43px">}</span>
<span class="m" style="left:992.5px;top:564.43px;font-size:14.95px;color:#2b91af;font-family:"DejaVu Sans Mono", "Liberation Mono", monospace;">22</span>
<span class="m c" style="left:1060px;top:564.43px"><b class="k">void</b> f(<b class="k">int</b> *<b class="g">a</b>, <b class="k">int</b> <b class="g">n</b>)</span>
<span class="m" style="left:992.5px;top:585.43px;font-size:14.95px;color:#2b91af;font-family:"DejaVu Sans Mono", "Liberation Mono", monospace;">23</span>
<span class="m c" style="left:1060px;top:585.43px">{</span>
<span class="m" style="left:992.5px;top:606.43px;font-size:14.95px;color:#2b91af;font-family:"DejaVu Sans Mono", "Liberation Mono", monospace;">24</span>
<span class="m c" style="left:1060px;top:606.43px">    <b class="g">a</b> = <b class="k">new</b> <b class="k">int</b>[<b class="n">100</b>];</span>
<span class="m" style="left:992.5px;top:627.43px;font-size:14.95px;color:#2b91af;font-family:"DejaVu Sans Mono", "Liberation Mono", monospace;">25</span>
<span class="m c" style="left:1060px;top:627.43px">    *(<b class="g">a</b> + <b class="g">n</b>) = <b class="n">7</b>;</span>
<span class="m" style="left:992.5px;top:649.43px;font-size:14.95px;color:#2b91af;font-family:"DejaVu Sans Mono", "Liberation Mono", monospace;">26</span>
<span class="m" style="left:992.5px;top:670.43px;font-size:14.95px;color:#2b91af;font-family:"DejaVu Sans Mono", "Liberation Mono", monospace;">27</span>
<span class="m c" style="left:1060px;top:670.43px">}</span>
<svg style="left:1046px;top:229px;" width="12" height="12" viewBox="0 0 12 12"><rect x="0.5" y="0.5" width="11" height="10" fill="#1e1e1e" stroke="#a5a5a5" stroke-width="1"/><rect x="3" y="4.8" width="6" height="1.4" fill="#e8e8e8"/></svg>
<div style="left:1051.9px;top:242px;width:1.3px;height:321.85px;background:#a5a5a5;"></div>
<div style="left:1051.9px;top:562.45px;width:6.3px;height:1.4px;background:#a5a5a5;"></div>
<svg style="left:1046px;top:569px;" width="12" height="12" viewBox="0 0 12 12"><rect x="0.5" y="0.5" width="11" height="10" fill="#1e1e1e" stroke="#a5a5a5" stroke-width="1"/><rect x="3" y="4.8" width="6" height="1.4" fill="#e8e8e8"/></svg>
<div style="left:1051.9px;top:582px;width:1.3px;height:109.35000000000005px;background:#a5a5a5;"></div>
<div style="left:1051.9px;top:689.95px;width:6.3px;height:1.4px;background:#a5a5a5;"></div>
<div style="left:1062.7px;top:268.25px;width:1.2px;height:274.25px;background:repeating-linear-gradient(180deg,#6c6c6c 0 4.5px,transparent 4.5px 7.5px)"></div>
<div style="left:1062.7px;top:608.25px;width:1.2px;height:61.75px;background:repeating-linear-gradient(180deg,#6c6c6c 0 4.5px,transparent 4.5px 7.5px)"></div>
<div style="left:1858px;top:160px;width:22px;height:562.5px;background:#3e3e42;"></div>
<div style="left:1859px;top:160px;width:20px;height:20px;background:#1b1b1c;"></div>
<svg style="left:1862px;top:163px;" width="15" height="17" viewBox="0 0 15 17"><path d="M7.2 0V16" stroke="#e6e6e6" stroke-width="1.4"/><path d="M4.4 3.2L7.2 0.3L10 3.2M4.4 13L7.2 16L10 13" fill="none" stroke="#e6e6e6" stroke-width="1.4"/><rect x="0" y="6" width="14.3" height="3.8" fill="#6a6a6a"/><rect x="0" y="5.9" width="14.3" height="1.1" fill="#f1f1f1"/><rect x="0" y="8.7" width="14.3" height="1.1" fill="#f1f1f1"/></svg>
<svg style="left:1863px;top:189px;" width="12" height="7" viewBox="0 0 12 7"><path d="M0 7H12L6 0Z" fill="#999999"/></svg>
<svg style="left:1863px;top:709px;" width="12" height="7" viewBox="0 0 12 7"><path d="M0 0H12L6 7Z" fill="#999999"/></svg>
<div style="left:945px;top:722.5px;width:935px;height:22px;background:#3e3e42;"></div>
<div style="left:9px;top:744.5px;width:1872px;height:9.2px;background:#3f3f46;"></div>
<div style="left:945.5px;top:723.8px;width:74.5px;height:19.7px;background:#333337;border:1px solid #434346;box-sizing:border-box;"></div>
<span style="left:948.5px;top:724.30px;font-size:15px;color:#f1f1f1;transform:scaleX(0.9834);">100 %</span>
<svg style="left:1009px;top:732px;" width="7" height="4" viewBox="0 0 7 4"><path d="M0 0H7L3.5 4Z" fill="#f1f1f1"/></svg>
<svg style="left:1027px;top:728px;" width="7" height="11" viewBox="0 0 7 11"><path d="M7 0V11L0 5.5Z" fill="#55555a"/></svg>
<svg style="left:1843px;top:728px;" width="7" height="11" viewBox="0 0 7 11"><path d="M0 0V11L7 5.5Z" fill="#55555a"/></svg>
<div style="left:1863px;top:221.2px;width:11px;height:247.5px;background:#686868;"></div>
<div style="left:1859px;top:227.5px;width:5px;height:9.5px;background:#577430;"></div>
<div style="left:1859px;top:237px;width:5px;height:14px;background:#e8e86e;"></div>
<div style="left:1859px;top:415px;width:5px;height:14px;background:#e8e86e;"></div>
<div style="left:1859px;top:429px;width:5px;height:18.5px;background:#577430;"></div>
<div style="left:1858px;top:420px;width:21px;height:2.5px;background:#e0e0e0;"></div>
<span style="left:13px;top:757.30px;font-size:15px;color:#d0d0d0;transform:scaleX(1.0302);">Output</span>
<svg style="left:69px;top:764px;" width="1739" height="6.2" viewBox="0 0 1739 6.2"><defs><pattern id="gp" width="5" height="5" patternUnits="userSpaceOnUse"><rect x="0" y="0.1" width="1" height="1" fill="#48484d"/><rect x="2.5" y="2.6" width="1" height="1" fill="#48484d"/></pattern></defs><rect x="0" y="0" width="1739" height="6.2" fill="url(#gp)"/></svg>
<svg style="left:1818px;top:764px;" width="9" height="5" viewBox="0 0 9 5"><path d="M0 0H9L4.5 5Z" fill="#f1f1f1"/></svg>
<svg style="left:1838.6px;top:760px;" width="10" height="15" viewBox="0 0 10 15"><path d="M2.4 0.7H7.2V8M2.4 0.7V8M0.4 8.2H9.6M5 8.5V14.5" fill="none" stroke="#f1f1f1" stroke-width="1.3"/><rect x="5.6" y="0.7" width="1.6" height="7.4" fill="#f1f1f1"/></svg>
<svg style="left:1859px;top:762px;" width="12" height="10.2" viewBox="0 0 12 10.2"><path d="M0.6 0.6L11.4 9.6M11.4 0.6L0.6 9.6" stroke="#f1f1f1" stroke-width="1.8"/></svg>
<div style="left:1880px;top:754px;width:1px;height:215px;background:#38383c;"></div>
<div style="left:8px;top:754px;width:1px;height:215px;background:#38383c;"></div>
<span style="left:18px;top:787.30px;font-size:15px;color:#f1f1f1;transform:scaleX(1.0218);">Show output from:</span>
<div style="left:149px;top:784px;width:375px;height:25px;background:#333337;border:1px solid #434346;box-sizing:border-box;"></div>
<span style="left:154px;top:786.80px;font-size:15px;color:#f1f1f1;transform:scaleX(1.0268);">Debug</span>
<svg style="left:511px;top:795px;" width="7" height="4" viewBox="0 0 7 4"><path d="M0 0H7L3.5 4Z" fill="#999999"/></svg>
<div style="left:533px;top:785px;width:1px;height:22px;background:#46464a;"></div>
<div style="left:570px;top:785px;width:1px;height:22px;background:#46464a;"></div>
<div style="left:634px;top:785px;width:1px;height:22px;background:#46464a;"></div>
<div style="left:671px;top:785px;width:1px;height:22px;background:#46464a;"></div>
<svg style="left:543px;top:787px;" width="17" height="18" viewBox="0 0 17 18"><g fill="none" stroke="#505054"><path d="M8.4 6.8C9.8 3.2 7.8 0.8 5.6 0.8C3.4 0.8 2.6 3 2.6 8" stroke-width="1.3"/><path d="M0.2 5.4L2.6 8.8L5.2 5.4" stroke-width="1.3"/><path d="M7 9.7H16.7M3 17.2H15.6" stroke-width="1.2"/></g><rect x="3" y="11.6" width="7.5" height="3.3" fill="#505054"/></svg>
<svg style="left:581px;top:789px;" width="16" height="15" viewBox="0 0 16 15"><g fill="none" stroke="#505054"><path d="M0.8 4H9M4.2 0.6L0.8 4L4.2 7.4" stroke-width="2"/><path d="M7.8 6.5H15M2.2 13.4H15" stroke-width="1.1"/></g><rect x="2.2" y="8.6" width="12.8" height="2.9" fill="#505054"/></svg>
<svg style="left:607px;top:789px;" width="16" height="15" viewBox="0 0 16 15"><g fill="none" stroke="#505054"><path d="M0.4 4H8.6M5.2 0.6L8.8 4L5.2 7.4" stroke-width="2"/><path d="M9 6.5H16M3 13.4H16" stroke-width="1.1"/></g><rect x="3" y="8.6" width="13" height="2.9" fill="#505054"/></svg>
<svg style="left:644px;top:787px;" width="17" height="18" viewBox="0 0 17 18"><g fill="#cacaca"><rect x="10.4" y="-0.3" width="6.4" height="2.4"/><rect x="10.4" y="4.9" width="6.4" height="2.4"/><rect x="2" y="10.1" width="14.8" height="2.4"/><rect x="2" y="15.3" width="14.8" height="2.4"/></g><path d="M0.8 0.4L10 9.2M9.6 0.4L0.8 9.2" stroke="#e07a68" stroke-width="1.7"/></svg>
<span style="left:680px;top:788.9px;font-size:9px;color:#d8d8d8;line-height:7.5px;height:16px;letter-spacing:-0.2px">ab<br>c</span>
<svg style="left:687px;top:790px;" width="12" height="14" viewBox="0 0 12 14"><path d="M5 1.4H10V9H3" fill="none" stroke="#d8d8d8" stroke-width="2.3"/><path d="M5 4.8L1 9L5 13.2" fill="none" stroke="#d8d8d8" stroke-width="2.1"/></svg>
<div style="left:9px;top:812.5px;width:1849px;height:134.5px;background:#252526;overflow:hidden">
<span class="o" style="left:15px;top:-4.60px">&#x27;1752013_BaiTap3.4.4.exe&#x27; (Win32): Loaded &#x27;C:\Windows\SysWOW64\bcryptprimitives.dll&#x27;. Cannot find or open the PDB file.</span>
<span class="o" style="left:15px;top:15.40px">&#x27;1752013_BaiTap3.4.4.exe&#x27; (Win32): Loaded &#x27;C:\Windows\SysWOW64\sechost.dll&#x27;. Cannot find or open the PDB file.</span>
<span class="o" style="left:15px;top:35.40px">The thread 0x2c3c has exited with code 0 (0x0).</span>
<span class="o" style="left:15px;top:55.40px">The thread 0xfc4 has exited with code 0 (0x0).</span>
<span class="o" style="left:15px;top:75.40px">The thread 0x2eb8 has exited with code 0 (0x0).</span>
<span class="o" style="left:15px;top:95.40px">The program &#x27;[13108] 1752013_BaiTap3.4.4.exe&#x27; has exited with code 0 (0x0).</span>
</div>
<div style="left:1858px;top:812.5px;width:22.5px;height:156px;background:#3e3e42;"></div>
<svg style="left:1864px;top:820px;" width="11" height="7" viewBox="0 0 11 7"><path d="M0 7H11L5.5 0Z" fill="#999999"/></svg>
<svg style="left:1864px;top:933px;" width="11" height="7" viewBox="0 0 11 7"><path d="M0 0H11L5.5 7Z" fill="#999999"/></svg>
<div style="left:1864px;top:877.5px;width:11px;height:22.5px;background:#686868;"></div>
<div style="left:9px;top:947px;width:1849px;height:21.7px;background:#3e3e42;"></div>
<svg style="left:16px;top:952px;" width="7" height="11" viewBox="0 0 7 11"><path d="M7 0V11L0 5.5Z" fill="#55555a"/></svg>
<svg style="left:1845px;top:952px;" width="7" height="11" viewBox="0 0 7 11"><path d="M0 0V11L7 5.5Z" fill="#55555a"/></svg>
<div style="left:8px;top:968.7px;width:60px;height:24px;background:#252526;border:1px solid #3f3f46;border-top:none;box-sizing:border-box;"></div>
<span style="left:15px;top:970.80px;font-size:15px;color:#0097fb;transform:scaleX(1.0531);">Output</span>
<span style="left:75.8px;top:971.80px;font-size:15px;color:#d0d0d0;transform:scaleX(0.9497);">Error List</span>
<div style="left:1912px;top:106px;width:8px;height:100px;background:#3f3f46;"></div>
<span style="left:1891.8px;top:106px;font-size:15px;color:#d0d0d0;transform-origin:0 0;transform:rotate(90deg) translate(0,-15px) scaleX(0.9626)">Server Explorer</span>
<div style="left:1912px;top:221px;width:8px;height:54px;background:#3f3f46;"></div>
<span style="left:1891.8px;top:221px;font-size:15px;color:#d0d0d0;transform-origin:0 0;transform:rotate(90deg) translate(0,-15px) scaleX(1.0286)">Toolbox</span>
<div style="left:1912px;top:290px;width:8px;height:67px;background:#3f3f46;"></div>
<span style="left:1891.8px;top:290px;font-size:15px;color:#d0d0d0;transform-origin:0 0;transform:rotate(90deg) translate(0,-15px) scaleX(0.9849)">Properties</span>
<div style="left:1912px;top:372px;width:8px;height:110px;background:#3f3f46;"></div>
<span style="left:1891.8px;top:372px;font-size:15px;color:#d0d0d0;transform-origin:0 0;transform:rotate(90deg) translate(0,-15px) scaleX(0.9951)">Diagnostic Tools</span>
<div style="left:0px;top:1000px;width:1920px;height:30px;background:#007acc;"></div>
<svg style="left:5px;top:1009px;" width="20" height="14" viewBox="0 0 20 14"><path d="M5.5 1H19L14.5 13H1Z" fill="none" stroke="#ffffff" stroke-width="1.6"/></svg>
<span style="left:35px;top:1005.80px;font-size:15px;color:#ffffff;transform:scaleX(1.0102);">Window docked: Main.cpp</span>
<span style="left:971px;top:1005.80px;font-size:15px;color:#ffffff;transform:scaleX(0.9672);">Ln 24</span>
<span style="left:1085px;top:1005.80px;font-size:15px;color:#ffffff;transform:scaleX(0.9998);">Col 22</span>
<span style="left:1199px;top:1005.80px;font-size:15px;color:#ffffff;transform:scaleX(0.9566);">Ch 19</span>
<span style="left:1369px;top:1005.80px;font-size:15px;color:#ffffff;transform:scaleX(0.9512);">INS</span>
<svg style="left:1713px;top:1009px;" width="12" height="14" viewBox="0 0 12 14"><path d="M6 14V2M1 7L6 1.5L11 7" fill="none" stroke="#dcd4c4" stroke-width="2.8"/></svg>
<span style="left:1736px;top:1005.80px;font-size:15px;color:#ffffff;transform:scaleX(1.0018);">Add to Source Control</span>
<svg style="left:1892.5px;top:1012px;" width="10" height="5" viewBox="0 0 10 5"><path d="M0 5H10L5 0Z" fill="#ffffff"/></svg>
<div style="left:0px;top:1030px;width:1920px;height:50px;background:#000000;"></div>
<svg style="left:20px;top:1045px;" width="20" height="20" viewBox="0 0 20 20"><path d="M0 2.9L8.2 1.7V9.6H0ZM9.2 1.6L20 0V9.6H9.2ZM0 10.5H8.2V18.3L0 17.1ZM9.2 10.5H20V20L9.2 18.4Z" fill="#ffffff"/></svg>
<div style="left:60px;top:1030px;width:430px;height:50px;background:#f2f2f2;"></div>
<svg style="left:71px;top:1041px;" width="28" height="28" viewBox="0 0 28 28"><circle cx="14" cy="14" r="11.5" fill="none" stroke="#111111" stroke-width="3.2"/></svg>
<span style="left:110px;top:1045.59px;font-size:18.5px;color:#3d3d3d;transform:scaleX(0.9333);">Type here to search</span>
<svg style="left:457px;top:1045px;" width="15" height="20" viewBox="0 0 15 20"><rect x="4.6" y="0.7" width="5.8" height="11.5" rx="2.9" fill="none" stroke="#333" stroke-width="1.4"/><path d="M1 9.5V11.5A6.5 5.5 0 0 0 14 11.5V9.5M7.5 17V19.4M4.2 19.4H10.8" fill="none" stroke="#333" stroke-width="1.3"/></svg>
<svg style="left:507px;top:1046px;" width="26" height="18" viewBox="0 0 26 18"><rect x="5.7" y="0.9" width="15.2" height="16.2" fill="none" stroke="#ffffff" stroke-width="1.4"/><path d="M3.6 3.2H1.6V14H3.6M22.4 3.2H24.4V14H22.4" fill="none" stroke="#ffffff" stroke-width="1.3"/></svg>
<svg style="left:571px;top:1043px;" width="25" height="25" viewBox="0 0 25 25"><path d="M1 11.5C1.5 4.5 7 0.3 13 0.3C20 0.3 24.5 5 24.5 12V15H8.8C9 19 13 21 17 21C19.6 21 22 20.2 23.6 19.2V23.4C21.6 24.5 19 25 16.2 25C8.5 25 3.8 20.5 3.8 14.5C3.8 10.5 6.2 7.6 9 6C5.5 6.5 2.6 8.5 1 11.5ZM9 10.4H18.4C18.3 7.4 16.4 5.6 13.8 5.6C11.2 5.6 9.4 7.6 9 10.4Z" fill="#0078d7"/></svg>
<svg style="left:632px;top:1043px;" width="30" height="24" viewBox="0 0 30 24"><path d="M0.5 2H10L12.5 4.5H28V21H0.5Z" fill="#f7d774"/><path d="M0.5 6.5H28.5V21.5H0.5Z" fill="#fce89a"/><rect x="2.5" y="2.8" width="7" height="1.6" fill="#5aa7e0"/><path d="M5.5 14H23.5V23.5H18.5V18.5H10.5V23.5H5.5Z" fill="#3a96dd"/></svg>
<svg style="left:693px;top:1040px;" width="30" height="30" viewBox="0 0 30 30"><path d="M9.5 9V6A5.5 5.5 0 0 1 20.5 6V9" fill="none" stroke="#ffffff" stroke-width="1.6"/><path d="M0.5 8.5H29.5V28.5H0.5Z" fill="#ffffff"/><rect x="8.8" y="12.2" width="5.6" height="5.6" fill="#f25022"/><rect x="15.6" y="12.2" width="5.6" height="5.6" fill="#7fba00"/><rect x="8.8" y="19" width="5.6" height="5.6" fill="#00a4ef"/><rect x="15.6" y="19" width="5.6" height="5.6" fill="#ffb900"/></svg>
<svg style="left:754px;top:1042px;" width="32" height="25" viewBox="0 0 32 25"><path d="M1 8L16 -0.2L31 8V24H1Z" fill="#ffffff"/><path d="M2.5 8.3H29.8L18.8 14.5L25.6 20.2Z" fill="#000000"/></svg>
<svg style="left:817px;top:1040px;" width="30" height="30" viewBox="0 0 30 30"><rect x="0" y="0" width="29.5" height="29.5" rx="2.5" fill="#0d0d0d"/><path d="M17.5 4C13 6 8 8.5 4 12.5C6 11.6 7.6 11.2 9 11.2C7 13.4 6 15.8 6 18.2C6 22 9.4 24.6 13.6 24.6C18 24.6 21.4 21.6 22.6 17.4C23 16.2 24 15.6 25.4 15.2L13.6 15.6C12 15.8 11 16.8 11 18.2C11 19.8 12.2 20.8 13.6 20.8C14.8 20.8 15.6 20 15.6 19C15.6 18.4 15.2 17.9 14.6 17.8C16.8 17.2 18.4 18.6 17.8 20.4C17.2 22 15.6 22.8 13.6 22.8C10.8 22.8 8.8 20.8 8.8 18.2C8.8 14.8 12 12.6 16.4 12.6L21 12.6C24.4 12.4 27 11.4 29 9.4C26 10.6 22.6 10.6 18.4 10.2C14.6 9.8 12.4 10 10.4 10.6C12.4 8.2 15 6 17.5 4Z" fill="#e21f26"/></svg>
<svg style="left:880px;top:1041px;" width="28" height="28" viewBox="0 0 28 28"><defs><linearGradient id="dv1" x1="0" y1="0" x2="0" y2="1"><stop offset="0" stop-color="#c8c8ee"/><stop offset="0.35" stop-color="#6c6cc0"/><stop offset="1" stop-color="#34348c"/></linearGradient><linearGradient id="dv2" x1="0" y1="0" x2="0" y2="1"><stop offset="0" stop-color="#1c98f6"/><stop offset="1" stop-color="#0a6cd0"/></linearGradient></defs><rect x="0" y="0" width="28" height="14.5" fill="url(#dv1)"/><rect x="0" y="14.5" width="28" height="13.5" fill="url(#dv2)"/></svg>
<span style="left:881.5px;top:1038.5px;font-size:11.5px;font-weight:bold;color:#ffffff;letter-spacing:0.3px">DEV</span>
<span style="left:880px;top:1051px;font-size:13.5px;font-weight:bold;color:#0b4a9c;letter-spacing:-0.5px">C++</span>
<div style="left:926px;top:1030px;width:61px;height:50px;background:#333333;"></div>
<svg style="left:942px;top:1040px;" width="29" height="30" viewBox="0 0 29 30"><g transform="scale(1.15) translate(0,-0.6)"><path d="M18.5 1L25.2 3.5V23.8L18.7 26.5L-0.1 20L0.2 19.3L18.5 20.7Z M1.3 8.6L2.5 7.8L6.7 10.6L13 4.6L15.8 5.8V17.6L13 18.8L6.7 13.4L2.5 16.2L1.3 15.4Z M3 10.3L5.1 12L3 13.7Z M12.2 9.2V15L8.5 12Z" fill="#865fc5" fill-rule="evenodd"/></g></svg>
<svg style="left:1004px;top:1041px;" width="28" height="28" viewBox="0 0 28 28"><circle cx="13.9" cy="13.5" r="13.7" fill="#4285f4"/><path d="M13.9 13.5L26.4 6.9A13.8 13.8 0 0 1 26.4 20.1Z" fill="#fbbc05" stroke="#ffffff" stroke-width="0.6"/><circle cx="13.9" cy="13.5" r="5.5" fill="#ffffff"/><circle cx="13.9" cy="13.5" r="4.7" fill="#34a853"/></svg>
<div style="left:621px;top:1077px;width:50.5px;height:3px;background:#76b9ed;"></div>
<div style="left:926px;top:1077px;width:61px;height:3px;background:#76b9ed;"></div>
<div style="left:993.5px;top:1077px;width:50.0px;height:3px;background:#76b9ed;"></div>
<svg style="left:1566px;top:1045px;" width="19" height="20" viewBox="0 0 19 20"><g fill="none" stroke="#ffffff" stroke-width="1.4"><circle cx="12.9" cy="4" r="3.2"/><circle cx="5.2" cy="11.5" r="3.2"/><path d="M0.7 19C1.1 16.2 2.9 14.7 5.2 14.7C7.5 14.7 9.4 16.2 9.8 19"/><path d="M9.2 8.8C10.2 7.7 11.5 7.2 12.9 7.2C15.4 7.2 17.3 8.8 17.8 11.8"/></g></svg>
<svg style="left:1612px;top:1050px;" width="16" height="9" viewBox="0 0 16 9"><path d="M0.7 8.5L8 1.2L15.3 8.5" fill="none" stroke="#ffffff" stroke-width="1.5"/></svg>
<svg style="left:1639.5px;top:1048px;" width="22" height="14" viewBox="0 0 22 14"><rect x="4.6" y="2.6" width="14.6" height="10" fill="none" stroke="#ffffff" stroke-width="1.3"/><rect x="6.4" y="4.4" width="11" height="6.4" fill="#ffffff"/><rect x="19.6" y="5.6" width="1.4" height="4" fill="#ffffff"/><path d="M1.4 0V2.6M4 0V2.6" fill="none" stroke="#ffffff" stroke-width="1.1"/><path d="M0.5 2.6H4.9V4.4Q4.9 6.4 2.7 6.6Q0.5 6.4 0.5 4.4Z" fill="#000000" stroke="#ffffff" stroke-width="1.1"/><path d="M2.7 6.6V12.8" stroke="#ffffff" stroke-width="1.2"/></svg>
<svg style="left:1672px;top:1048px;" width="17" height="16" viewBox="0 0 17 16"><g fill="none" stroke="#ffffff" stroke-width="1.1"><path d="M0.7 15A14 14 0 0 1 15.5 0.8"/><path d="M5 15A9.6 9.6 0 0 1 15.5 5.2" opacity="0.75"/><path d="M9.2 15A5.4 5.4 0 0 1 15.5 9.4" opacity="0.75"/></g><circle cx="14" cy="13.6" r="1.6" fill="#ffffff"/></svg>
<svg style="left:1700px;top:1047px;" width="21" height="17" viewBox="0 0 21 17"><g fill="none" stroke="#ffffff" stroke-width="1.3"><path d="M0.7 5.6H3.6L7.6 1.6V15.4L3.6 11.4H0.7Z"/><path d="M10.4 5.8A4 4 0 0 1 10.4 11.2"/><path d="M13.2 3.4A7.4 7.4 0 0 1 13.2 13.6"/><path d="M16.2 1A11 11 0 0 1 16.2 16"/></g></svg>
<span style="left:1733px;top:1045.80px;font-size:15px;color:#ffffff;transform:scaleX(0.8827);">ENG</span>
<span style="left:1786px;top:1033.30px;font-size:15px;color:#ffffff;transform:scaleX(0.9447);">9:11 PM</span>
<span style="left:1781.5px;top:1056.30px;font-size:15px;color:#ffffff;transform:scaleX(1.0344);">3/4/2018</span>
<svg style="left:1869px;top:1046px;" width="20" height="19" viewBox="0 0 20 19"><path d="M0.7 0.7H19.3V14.3H12.6L10 17.4L7.4 14.3H0.7Z" fill="none" stroke="#ffffff" stroke-width="1.4"/></svg>
<div style="left:1914px;top:1030px;width:1px;height:50px;background:#3c3c3c;"></div>
</div></body></html>
